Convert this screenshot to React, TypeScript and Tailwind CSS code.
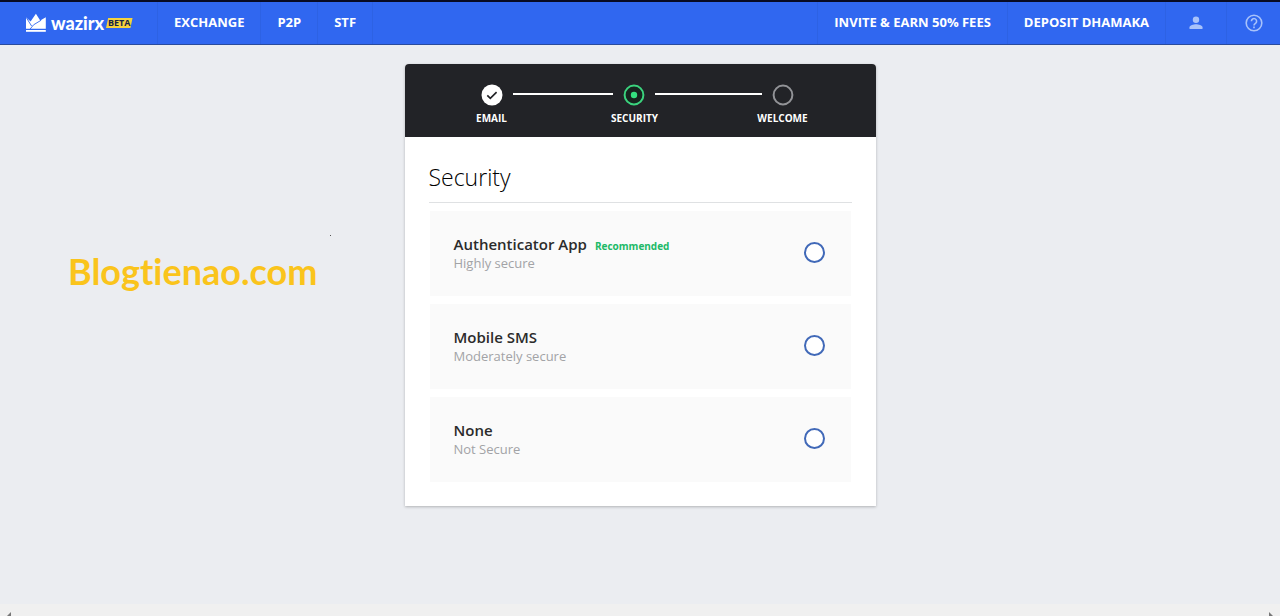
import { useState } from "react";

type Option = { id: string; title: string; note: string; recommended?: boolean };

const options: Option[] = [
  { id: "app", title: "Authenticator App", note: "Highly secure", recommended: true },
  { id: "sms", title: "Mobile SMS", note: "Moderately secure" },
  { id: "none", title: "None", note: "Not Secure" },
];

function Logo() {
  return (
    <a href="#home" className="flex w-[157px] items-center pl-[25px] text-white">
      <svg viewBox="0 0 22 20" className="h-5 w-[22px] shrink-0" fill="currentColor" aria-hidden="true">
        <path d="M1 4.2 5.6 8.4 10.9.8 15.2 7.6 20.8 4.2V15.8H1Z" />
        <path d="M1 4.2 6.6 13M5 16.2 8.6 11.8 16.2 7.2" fill="none" stroke="#3067f0" strokeWidth="0.9" />
        <path d="M1 17H20.8V18.8H1Z" />
      </svg>
      <span className="ml-1 font-['Lato',sans-serif] text-[18px] leading-5 font-black">wazirx</span>
      <span className="ml-[2px] bg-[#f6d33c] px-[2px] text-[9px] leading-[10px] font-bold text-[#172347] [clip-path:polygon(8%_0,100%_0,92%_100%,0_100%)]">
        BETA
      </span>
    </a>
  );
}

function NavLink({ label }: { label: string }) {
  return (
    <a href="#nav" className="flex items-center border-l border-[#2d62e4] px-4 text-[13px] font-bold text-white">
      {label}
    </a>
  );
}

function Header() {
  return (
    <header className="flex h-[45px] justify-between border-t-2 border-b border-t-[#080b24] border-b-[#294b9d] bg-[#3067f0]">
      <nav className="flex" aria-label="Markets">
        <Logo />
        <NavLink label="EXCHANGE" />
        <NavLink label="P2P" />
        <NavLink label="STF" />
        <span className="w-px bg-[#2d62e4]" />
      </nav>
      <nav className="flex" aria-label="Account">
        <NavLink label="INVITE & EARN 50% FEES" />
        <NavLink label="DEPOSIT DHAMAKA" />
        <button type="button" aria-label="Profile" className="flex w-[61px] items-center justify-center border-l border-[#2d62e4] text-[#a8c2fa]">
          <svg viewBox="0 0 14 14" className="size-[14px]" fill="currentColor" aria-hidden="true">
            <circle cx="7" cy="3.7" r="3.2" />
            <path d="M.5 13V11.3C.5 9.2 4.7 8.2 7 8.2S13.5 9.2 13.5 11.3V13Z" />
          </svg>
        </button>
        <button type="button" aria-label="Help" className="flex w-[54px] items-center justify-center border-l border-[#2d62e4] text-[#a8c2fa]">
          <svg viewBox="0 0 18 18" className="size-[18px]" fill="none" stroke="currentColor" strokeWidth="1.6" aria-hidden="true">
            <circle cx="9" cy="9" r="7.8" />
            <path d="M6.4 7.2a2.6 2.6 0 1 1 4.1 2.1C9.5 10 9 10.4 9 11.4M9 12.6V14.2" />
          </svg>
        </button>
      </nav>
    </header>
  );
}

function Step({ label, state }: { label: string; state: "done" | "current" | "next" }) {
  return (
    <li className="flex w-[42px] flex-col items-center gap-[3px] text-[10px] leading-[18px] font-bold whitespace-nowrap text-white">
      <svg viewBox="0 0 22 22" className="size-[22px]" fill="none" aria-hidden="true">
        {state === "done" && (
          <>
            <circle cx="11" cy="11" r="10.5" fill="#fff" />
            <path d="m6.3 11.4 3 2.9 6.3-6.2" stroke="#222327" strokeWidth="1.7" />
          </>
        )}
        {state === "current" && (
          <>
            <circle cx="11" cy="11" r="9.4" fill="#17251f" stroke="#3bd47e" strokeWidth="2" />
            <circle cx="11" cy="11" r="3.2" fill="#34e17f" />
          </>
        )}
        {state === "next" && <circle cx="11" cy="11" r="9.4" stroke="#929397" strokeWidth="2" />}
      </svg>
      {label}
    </li>
  );
}

export default function App() {
  const [selected, setSelected] = useState("");
  return (
    <div className="flex min-h-screen flex-col bg-[#ebedf1] font-['Open_Sans',sans-serif]">
      <Header />
      <main className="relative flex-1 px-4 pt-[19px] pb-8">
        <p className="absolute top-[202px] left-[68px] font-['Lato',sans-serif] text-[36px] leading-12 font-bold text-[#fac41c] [font-variant-ligatures:none]">
          Blogtienao.com
        </p>
        <span className="absolute top-[190px] left-[330px] size-px bg-[#555]" />
        <section className="relative mx-auto max-w-[471px] overflow-hidden rounded-t-[4px] bg-white shadow-[0_1px_3px_rgba(0,0,0,0.25)]">
          <ol className="flex h-[73px] items-start bg-[#222327] pt-[20px] pr-[72px] pl-[66px]">
            <Step label="EMAIL" state="done" />
            <li aria-hidden="true" className="mt-[9px] h-[2px] grow-20 bg-white" />
            <Step label="SECURITY" state="current" />
            <li aria-hidden="true" className="mt-[9px] h-[2px] grow-21 bg-white" />
            <Step label="WELCOME" state="next" />
          </ol>
          <div className="px-6 pt-6 pb-6">
            <h1 className="border-b border-[#dfe1e3] pb-[9px] text-[23px] leading-8 font-light text-black">Security</h1>
            <form className="mx-px mt-2 flex flex-col gap-2" aria-label="Security method">
              {options.map((o) => (
                <label key={o.id} htmlFor={o.id} className="flex h-[85px] cursor-pointer items-center justify-between bg-[#fafafa] pr-[26px] pb-[2px] pl-6">
                  <span className="flex flex-col">
                    <span className="flex h-5 items-baseline gap-2 text-[15px] leading-5 font-semibold text-[#2b2b2b]">
                      {o.title}
                      {o.recommended && <span className="text-[10px] font-bold text-[#20b967]">Recommended</span>}
                    </span>
                    <span className="text-[13px] leading-[18px] text-[#a2a3a6]">{o.note}</span>
                  </span>
                  <input
                    id={o.id}
                    type="radio"
                    name="method"
                    checked={selected === o.id}
                    onChange={() => setSelected(o.id)}
                    className="size-[21px] appearance-none rounded-full border-2 border-[#4169b8] bg-white checked:border-[6px]"
                  />
                </label>
              ))}
            </form>
          </div>
        </section>
      </main>
      <div aria-hidden="true" className="flex h-3 items-end justify-between bg-[#f0f0f0] px-[6px]">
        <svg viewBox="0 0 5 4" className="h-1 w-[5px]" fill="#777"><path d="M5 0V4H1Z" /></svg>
        <svg viewBox="0 0 5 4" className="h-1 w-[5px]" fill="#777"><path d="M0 0V4H4Z" /></svg>
      </div>
    </div>
  );
}
